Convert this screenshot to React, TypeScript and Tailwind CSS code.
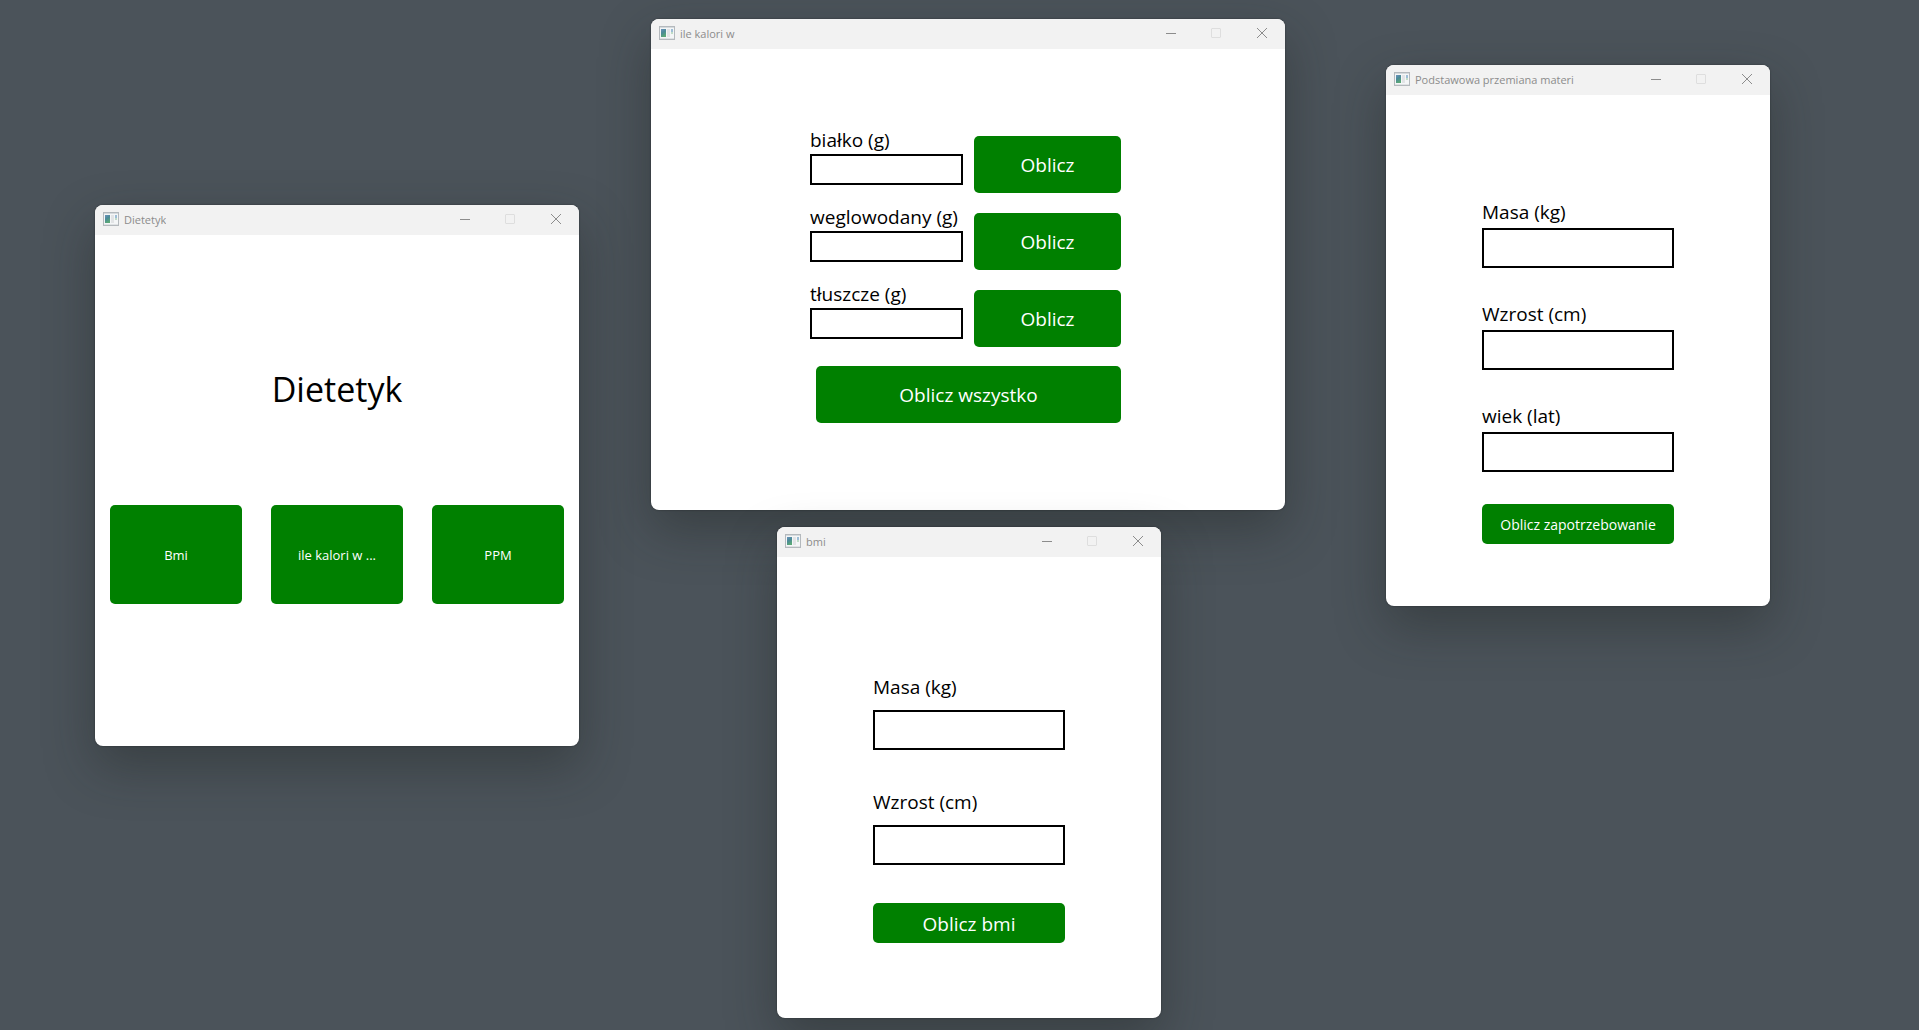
import type { ReactNode } from "react";

const buttonClass = "flex items-center justify-center rounded-[5px] bg-[#008000] pt-0.5 text-white hover:bg-[#006b00]";
const inputClass = "w-full border-2 border-black bg-white px-2 text-lg outline-none";
const labelClass = "text-[19px] leading-7 whitespace-nowrap";

function AppIcon() {
  return (
    <svg width="16" height="14" viewBox="0 0 16 14" aria-hidden="true">
      <defs>
        <linearGradient id="pane" x1="0" y1="0" x2="0.4" y2="1">
          <stop offset="0" stopColor="#6b93bd" />
          <stop offset="0.5" stopColor="#4b8a97" />
          <stop offset="1" stopColor="#5aa877" />
        </linearGradient>
      </defs>
      <rect x="0.5" y="0.5" width="15" height="13" fill="#f4f6f7" stroke="#b4b9bd" />
      <rect x="1" y="1" width="14" height="1" fill="#d5dadd" />
      <rect x="2" y="3" width="5" height="8" fill="url(#pane)" />
      <rect x="8" y="3" width="3" height="8" fill="#e2e4e6" />
      <rect x="12" y="3" width="2" height="3" fill="#9dbdd6" />
      <rect x="12" y="6" width="2" height="2" fill="#bfdcc6" />
      <rect x="1" y="12" width="14" height="1" fill="#dfe2e4" />
    </svg>
  );
}

function TitleBar({ title }: { title: string }) {
  return (
    <header className="flex h-[30px] items-stretch bg-[#f2f2f2] text-[#8c8c8c]">
      <div className="flex min-w-0 flex-1 items-center gap-[5px] pb-0.5 pl-2">
        <AppIcon />
        <h2 className="truncate pt-0.5 text-[11px] leading-4">{title}</h2>
      </div>
      <div className="flex pb-0.5">
        <button aria-label="Minimalizuj" className="flex w-[46px] items-center justify-center">
          <svg width="12" height="12" viewBox="0 0 12 12"><path d="M2 6.5h10" stroke="currentColor" /></svg>
        </button>
        <button aria-label="Maksymalizuj" disabled className="flex w-[46px] items-center justify-center text-[#dedede]">
          <svg width="10" height="10" viewBox="0 0 10 10"><rect x="0.5" y="0.5" width="9" height="9" rx="0.5" fill="none" stroke="currentColor" /></svg>
        </button>
        <button aria-label="Zamknij" className="flex w-[46px] items-center justify-center">
          <svg width="12" height="12" viewBox="0 0 12 12"><path d="M1 1l10 10M11 1l-10 10" stroke="currentColor" /></svg>
        </button>
      </div>
    </header>
  );
}

function Window({ title, className, children }: { title: string; className: string; children: ReactNode }) {
  return (
    <section className={`absolute rounded-lg shadow-[0_0_2px_rgba(0,0,0,0.4),0_20px_50px_rgba(30,36,32,0.4)] ${className}`}>
      <div className="overflow-hidden rounded-lg bg-white">
        <TitleBar title={title} />
        {children}
      </div>
    </section>
  );
}

function Field({ id, label, className }: { id: string; label: string; className: string }) {
  return (
    <div className={`flex flex-col ${className}`}>
      <label htmlFor={id} className={labelClass}>{label}</label>
      <input id={id} className={`${inputClass} h-10`} />
    </div>
  );
}

const nutrients = [
  { id: "bialko", label: "białko (g)" },
  { id: "weglowodany", label: "weglowodany (g)" },
  { id: "tluszcze", label: "tłuszcze (g)" },
];

export default function App() {
  return (
    <main className="relative min-h-screen overflow-hidden bg-[#4b535a] font-['Open_Sans','Noto_Sans',sans-serif] text-black">
      <Window title="Dietetyk" className="top-[205px] left-[95px] w-[484px]">
        <div className="px-[15px] pt-[130px] pb-[142px]">
          <h1 className="text-center text-[34px] leading-[48px]">Dietetyk</h1>
          <div className="mt-[92px] grid grid-cols-3 gap-[29px] text-[13px]">
            <button className={`${buttonClass} h-[99px]`}>Bmi</button>
            <button className={`${buttonClass} h-[99px]`}>ile kalori w ...</button>
            <button className={`${buttonClass} h-[99px]`}>PPM</button>
          </div>
        </div>
      </Window>

      <Window title="ile kalori w" className="top-[19px] left-[651px] w-[634px]">
        <form className="pt-[77px] pr-[164px] pb-[87px] pl-[159px]" onSubmit={(e) => e.preventDefault()}>
          <div className="flex flex-col gap-2.5">
            {nutrients.map((item) => (
              <div key={item.id} className="flex items-end gap-[11px]">
                <div className="flex w-[153px] flex-col pb-2">
                  <label htmlFor={item.id} className={labelClass}>{item.label}</label>
                  <input id={item.id} className={`${inputClass} h-[31px]`} />
                </div>
                <button type="button" className={`${buttonClass} h-[57px] flex-1 text-[19px]`}>Oblicz</button>
              </div>
            ))}
          </div>
          <div className="mt-[19px] flex pl-1.5">
            <button className={`${buttonClass} h-[57px] flex-1 text-[19px]`}>Oblicz wszystko</button>
          </div>
        </form>
      </Window>

      <Window title="bmi" className="top-[527px] left-[777px] w-96">
        <form className="px-24 pt-[116px] pb-[75px]" onSubmit={(e) => e.preventDefault()}>
          <div className="flex flex-col gap-[38px]">
            <Field id="bmi-masa" label="Masa (kg)" className="gap-[9px]" />
            <Field id="bmi-wzrost" label="Wzrost (cm)" className="gap-[9px]" />
            <button className={`${buttonClass} h-10 text-[19px]`}>Oblicz bmi</button>
          </div>
        </form>
      </Window>

      <Window title="Podstawowa przemiana materi" className="top-[65px] left-[1386px] w-96">
        <form className="px-24 pt-[103px] pb-[62px]" onSubmit={(e) => e.preventDefault()}>
          <div className="flex flex-col gap-8">
            <Field id="ppm-masa" label="Masa (kg)" className="gap-0.5" />
            <Field id="ppm-wzrost" label="Wzrost (cm)" className="gap-0.5" />
            <Field id="ppm-wiek" label="wiek (lat)" className="gap-0.5" />
          </div>
          <button className={`${buttonClass} mt-8 h-10 w-full text-sm whitespace-nowrap`}>Oblicz zapotrzebowanie</button>
        </form>
      </Window>
    </main>
  );
}
